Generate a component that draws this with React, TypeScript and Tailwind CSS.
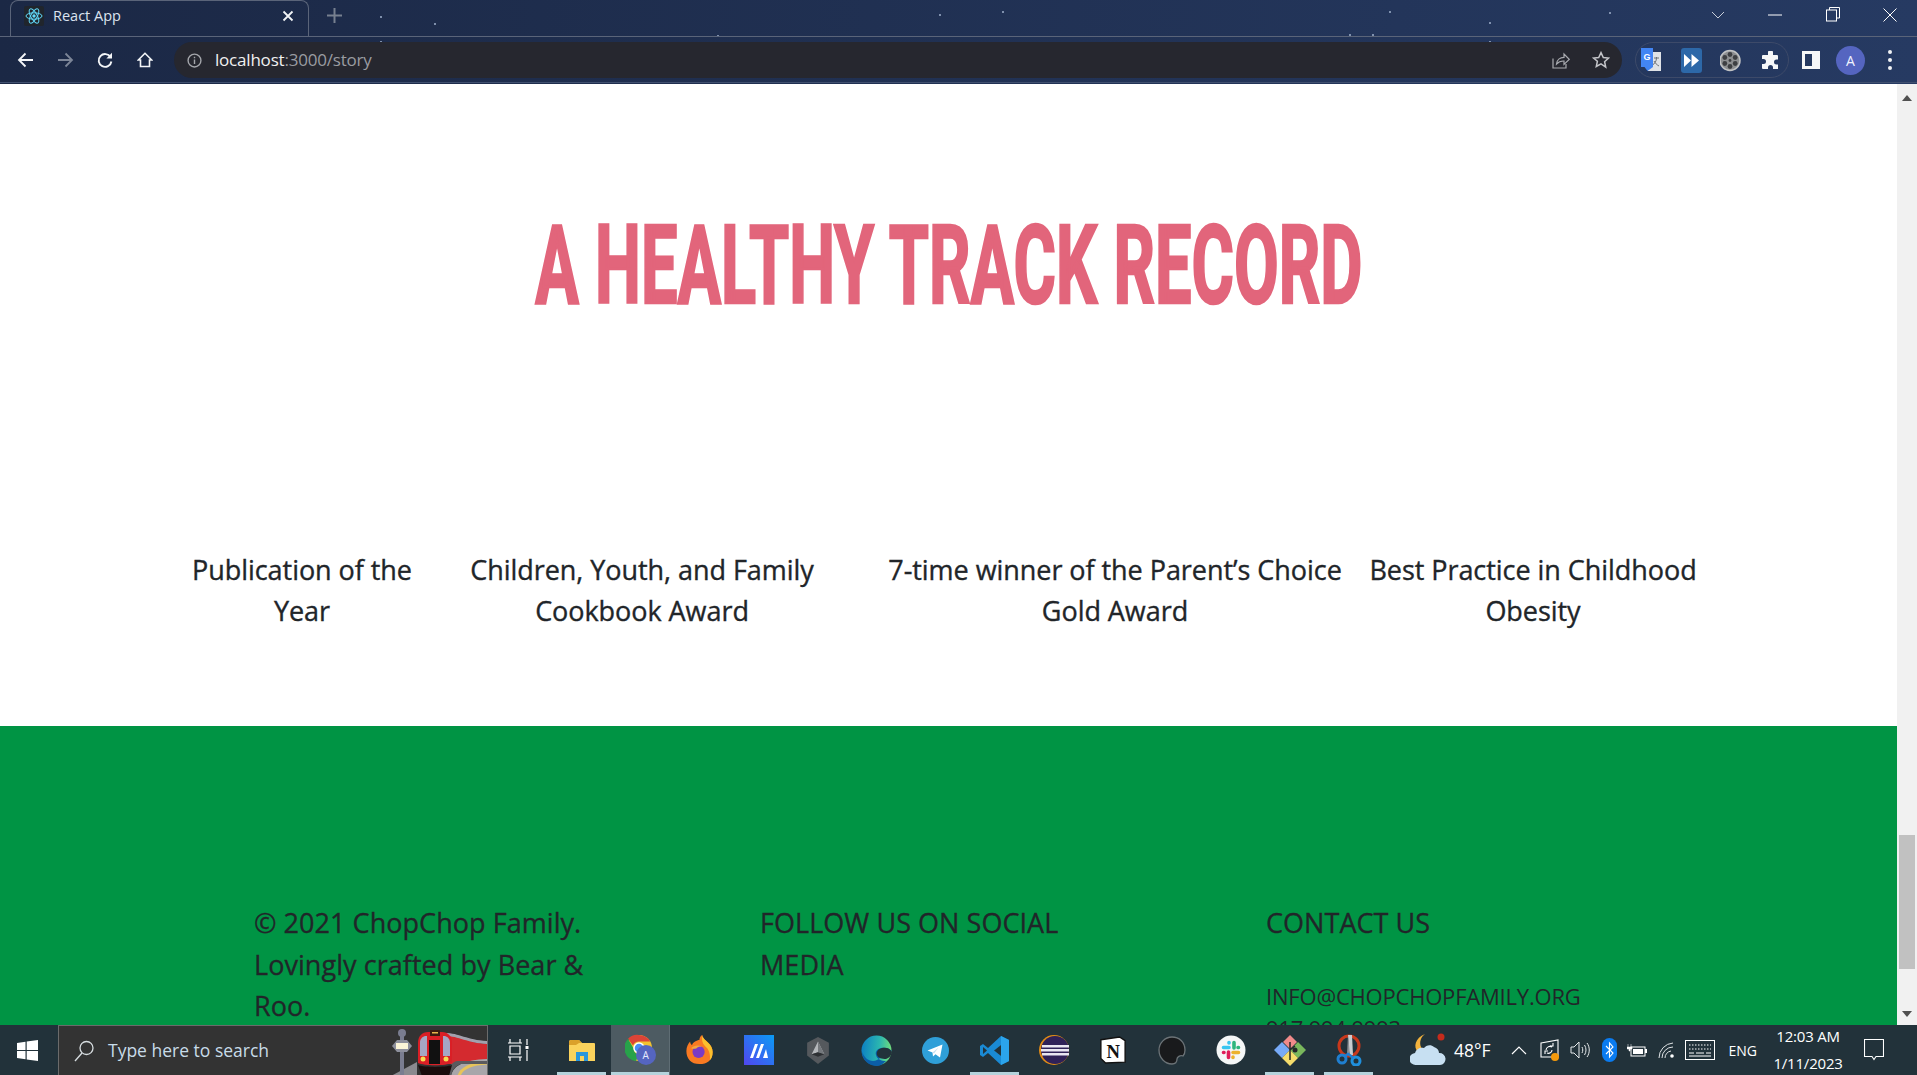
import React from "react";

const stars: string[] = [
  "left-[380px] top-[16px]", "left-[434px] top-[23px]", "left-[380px] top-[41px]",
  "left-[717px] top-[35px]", "left-[939px] top-[14px]", "left-[1002px] top-[11px]",
  "left-[1349px] top-[34px]", "left-[1372px] top-[34px]", "left-[1389px] top-[11px]",
  "left-[1489px] top-[22px]", "left-[1609px] top-[12px]", "left-[1489px] top-[41px]",
];

function Tab() {
  return (
    <div className="ml-[10px] flex h-[37px] w-[299px] items-center rounded-t-[8px] border-x border-t border-[#5a6479] pb-[5px] pl-[13px] pr-[14px]">
      <svg width="20" height="20" viewBox="0 0 20 20" className="rounded-[2px] bg-[#20252c]">
        <g fill="none" stroke="#61dafb" strokeWidth="1">
          <ellipse cx="10" cy="10" rx="8" ry="3.2" />
          <ellipse cx="10" cy="10" rx="8" ry="3.2" transform="rotate(60 10 10)" />
          <ellipse cx="10" cy="10" rx="8" ry="3.2" transform="rotate(120 10 10)" />
        </g>
        <circle cx="10" cy="10" r="1.7" fill="#61dafb" />
      </svg>
      <span className="ml-[9px] font-['Open_Sans',sans-serif] text-[14.5px] text-[#dbe3ef]">React App</span>
      <svg width="12" height="12" viewBox="0 0 12 12" className="ml-auto" stroke="#f1f3f5" strokeWidth="1.8">
        <path d="M1.5 1.5l9 9M10.5 1.5l-9 9" />
      </svg>
    </div>
  );
}

function WindowControls() {
  return (
    <div className="ml-auto flex items-center pb-[7px] pr-[20px]">
      <svg width="14" height="10" viewBox="0 0 14 10" fill="none" stroke="#c8ced9" strokeWidth="1" className="mr-[43px]">
        <path d="M1 2l6 6 6-6" />
      </svg>
      <svg width="14" height="2" viewBox="0 0 14 2" className="mr-[44px]"><path d="M0 1h14" stroke="#fff" strokeWidth="1" /></svg>
      <svg width="14" height="15" viewBox="0 0 14 15" fill="none" stroke="#fff" strokeWidth="1" className="mr-[43px]">
        <rect x="0.5" y="3" width="10" height="11" />
        <path d="M3.5 3V.5h10V11H11" />
      </svg>
      <svg width="14" height="14" viewBox="0 0 14 14" stroke="#fff" strokeWidth="1"><path d="M.5.5l13 13M13.5.5l-13 13" /></svg>
    </div>
  );
}

function ToolbarLeft() {
  return (
    <div className="flex items-center pl-[17px]">
      <svg width="17" height="16" viewBox="0 0 17 16" fill="none" stroke="#f4f6f8" strokeWidth="1.8" className="mr-[23px]"><path d="M16 8H2M8.5 1.5L2 8l6.5 6.5" /></svg>
      <svg width="17" height="16" viewBox="0 0 17 16" fill="none" stroke="#7c8597" strokeWidth="1.8" className="mr-[23px]"><path d="M1 8h14M8.5 1.5L15 8l-6.5 6.5" /></svg>
      <svg width="16" height="17" viewBox="0 0 16 17" fill="none" stroke="#f4f6f8" strokeWidth="1.9" className="mr-[24px]">
        <path d="M13.6 5.2A6.4 6.4 0 1 0 14.4 9.5" />
        <path d="M15 .8v5.6H9.4z" fill="#f4f6f8" stroke="none" />
      </svg>
      <svg width="16" height="16" viewBox="0 0 16 16" fill="none" stroke="#f4f6f8" strokeWidth="1.6"><path d="M8 1.3L1.3 8h2.2v6.5h9V8h2.2z" /></svg>
    </div>
  );
}

function Omnibox() {
  return (
    <div className="ml-[21px] flex h-[36px] w-[1448px] items-center rounded-full bg-[#26272f] pl-[13px] pr-[12px]">
      <svg width="15" height="15" viewBox="0 0 14 14" fill="none" stroke="#a4a6ab" strokeWidth="1.3">
        <circle cx="7" cy="7" r="6" />
        <path d="M7 6v4.2M7 3.6v1.3" />
      </svg>
      <span className="ml-[13px] font-['Open_Sans',sans-serif] text-[17px] tracking-[-0.2px] text-[#f1f1f1]">
        localhost<span className="text-[#9a9ca1]">:3000/story</span>
      </span>
      <svg width="18" height="18" viewBox="0 0 18 18" fill="none" stroke="#a9abb0" strokeWidth="1.2" className="ml-auto mr-[22px]">
        <path d="M1 7.5V17h13v-4" />
        <path d="M4.500 13c.3-4 3.500-6.600 7.500-6.600V3l5.200 5.400-5.200 5V10c-3.200-.2-5.600 1-7.500 3z" />
      </svg>
      <svg width="18" height="18" viewBox="0 0 18 18" fill="none" stroke="#c4c5c9" strokeWidth="1.5"><path d="M9 1.600l2.300 4.900 5.200.6-3.900 3.600 1.100 5.300L9 12.800l-4.700 2.700 1.100-5.300L1.500 7.100l5.200-.6z" /></svg>
    </div>
  );
}

function Extensions() {
  return (
    <div className="ml-[13px] flex h-[36px] w-[154px] items-center rounded-full border border-[#3d4a69] pl-[4px]">
      <svg width="22" height="24" viewBox="0 0 22 24">
        <rect x="8" y="4" width="13" height="19" fill="#dfe2e6" />
        <path d="M14 10h5M16.500 9v1c0 3-2 6-4 7M14 13c1 2 3 4 5 5" stroke="#6d7278" strokeWidth="1" fill="none" />
        <path d="M1 0h12v19l-5.500 4L4.500 19H1z" fill="#4285f4" />
        <text x="3.500" y="12" fontSize="9" fontWeight="700" fill="#fff" fontFamily="Liberation Sans, sans-serif">G</text>
      </svg>
      <svg width="21" height="25" viewBox="0 0 21 25" className="ml-[19px]">
        <rect width="21" height="25" rx="3" fill="#2d68a8" />
        <path d="M3 6l7 6.500-7 6.500zM10.500 6l7.500 6.500-7.500 6.500z" fill="#fff" />
      </svg>
      <svg width="21" height="25" viewBox="0 0 21 25" className="ml-[18px]">
        <circle cx="10" cy="12.500" r="10" fill="#8d8f91" />
        <circle cx="10" cy="12.500" r="10" fill="none" stroke="#c1c3c4" strokeWidth="1.500" />
        <g fill="#3d3f42">
          <circle cx="10" cy="6.500" r="2.400" /><circle cx="10" cy="18.500" r="2.400" />
          <circle cx="4.800" cy="9.500" r="2.400" /><circle cx="15.200" cy="9.500" r="2.400" />
          <circle cx="4.800" cy="15.500" r="2.400" /><circle cx="15.200" cy="15.500" r="2.400" />
          <circle cx="10" cy="12.500" r="1.400" />
        </g>
      </svg>
      <svg width="19" height="19" viewBox="0 0 19 19" fill="#f6f7f8" className="ml-[20px]">
        <path d="M7 1.500a2.500 2.500 0 0 1 5 0V4h4a1 1 0 0 1 1 1v3.500h-1.500a2.500 2.500 0 0 0 0 5H17V18H12v-1.500a2.500 2.500 0 0 0-5 0V18H2a1 1 0 0 1-1-1v-4h1.500a2.500 2.500 0 0 0 0-5H1V5a1 1 0 0 1 1-1h5z" />
      </svg>
    </div>
  );
}

function ToolbarRight() {
  return (
    <div className="flex items-center">
      <div className="ml-[13px] h-[18px] w-[18px] border-[3px] border-r-[8px] border-[#f6f7f8]" />
      <div className="ml-[16px] flex h-[29px] w-[29px] items-center justify-center rounded-full bg-[#5565c0] font-['Open_Sans',sans-serif] text-[14px] text-[#f1f3ff]">A</div>
      <div className="ml-[23px] flex flex-col gap-[4px]">
        <div className="h-[4px] w-[4px] rounded-full bg-[#f1f3f5]" />
        <div className="h-[4px] w-[4px] rounded-full bg-[#f1f3f5]" />
        <div className="h-[4px] w-[4px] rounded-full bg-[#f1f3f5]" />
      </div>
    </div>
  );
}

function BrowserChrome() {
  return (
    <div className="relative h-[84px] shrink-0 bg-gradient-to-r from-[#1b2845] to-[#263a62]">
      {stars.map((c, i) => (
        <div key={i} className={`absolute h-[2px] w-[2px] rounded-full bg-[#9fb0cb] ${c}`} />
      ))}
      <div className="relative flex h-[37px] items-center border-b border-[#5a6479]">
        <Tab />
        <svg width="15" height="15" viewBox="0 0 15 15" stroke="#77808f" strokeWidth="2" className="mb-[5px] ml-[18px]"><path d="M7.500 0v15M0 7.500h15" /></svg>
        <WindowControls />
      </div>
      <div className="relative flex h-[46px] items-center border-b border-[#41506f] pt-[1px]">
        <ToolbarLeft />
        <Omnibox />
        <Extensions />
        <ToolbarRight />
      </div>
    </div>
  );
}

function Award({ w, lines }: { w: string; lines: string[] }) {
  return (
    <div className={`${w} shrink-0 text-center`}>
      {lines.map((l) => <div key={l}>{l}</div>)}
    </div>
  );
}

function Content() {
  return (
    <div className="min-w-0 flex-1 overflow-hidden bg-white font-['Open_Sans',sans-serif] text-[#212529]">
      <div className="flex h-[642px] flex-col">
        <div className="mt-[132px] flex h-[100px] justify-center overflow-visible">
          <h1 className="origin-center scale-x-[0.59] whitespace-nowrap font-['Roboto',sans-serif] text-[110px] font-bold leading-[100px] text-[#e2657b] [-webkit-text-stroke:2.5px_#e2657b]">
            A HEALTHY TRACK RECORD
          </h1>
        </div>
        <div className="mt-[233px] flex pl-[181px] text-[27px] font-medium leading-[41px] tracking-[-0.05px] text-[#212529] [-webkit-text-stroke:0.35px_#212529]">
          <Award w="w-[242px]" lines={["Publication of the", "Year"]} />
          <Award w="w-[438px]" lines={["Children, Youth, and Family", "Cookbook Award"]} />
          <Award w="w-[508px]" lines={["7-time winner of the Parent’s Choice", "Gold Award"]} />
          <Award w="w-[328px]" lines={["Best Practice in Childhood", "Obesity"]} />
        </div>
      </div>
      <div className="grid h-[299px] grid-cols-[506px_506px_506px] bg-[#009444] pl-[254px] pt-[176px] text-[27px] font-medium leading-[41.5px] tracking-[0.05px] [-webkit-text-stroke:0.3px_#212529]">
        <div>
          <div>© 2021 ChopChop Family.</div>
          <div>Lovingly crafted by Bear &amp;</div>
          <div>Roo.</div>
        </div>
        <div>
          <div>FOLLOW US ON SOCIAL</div>
          <div>MEDIA</div>
        </div>
        <div>
          <div>CONTACT US</div>
          <div className="mt-[36px] text-[22px] font-normal leading-[32px] tracking-[-0.2px] [-webkit-text-stroke:0px]">INFO@CHOPCHOPFAMILY.ORG</div>
          <div className="text-[22px] font-normal leading-[32px] tracking-[-0.2px] [-webkit-text-stroke:0px]">917.994.9993</div>
        </div>
      </div>
    </div>
  );
}

function Scrollbar() {
  return (
    <div className="flex w-[20px] shrink-0 flex-col items-center bg-[#f1f1f1]">
      <svg width="10" height="6" viewBox="0 0 10 6" className="mt-[11px]"><path d="M5 0l5 6H0z" fill="#505050" /></svg>
      <div className="mt-[734px] h-[134px] w-[16px] bg-[#c1c1c1]" />
      <svg width="10" height="6" viewBox="0 0 10 6" className="mt-[42px]"><path d="M5 6L0 0h10z" fill="#505050" /></svg>
    </div>
  );
}

function Slot({ children, active }: { children: React.ReactNode; active?: boolean }) {
  return (
    <div className="relative flex h-full w-[59px] shrink-0 items-center justify-center">
      {children}
      {active && <div className="absolute bottom-0 left-[5px] right-[5px] h-[3px] bg-[#b5d3dc]" />}
    </div>
  );
}

function TrainArt() {
  return (
    <svg width="96" height="49" viewBox="0 0 96 49" className="mt-[1px] shrink-0">
      <path d="M0 49l26-14v14z" fill="#8a8a8f" />
      <rect x="9" y="8" width="4" height="41" fill="#7a7d90" />
      <circle cx="11" cy="6" r="4" fill="#7a7d90" />
      <path d="M1 19l5-6h10l5 6-5 6H6z" fill="#8d8f9c" />
      <rect x="5" y="16" width="12" height="6" fill="#fbf5d8" />
      <path d="M50 8c16-2 26 8 46 9v20H50z" fill="#d42a2f" />
      <path d="M54 6c14 0 22 7 42 8v3C76 16 68 9 54 9z" fill="#a2a1ad" />
      <path d="M60 49c2-10 12-16 36-17v17z" fill="#a8a6aa" />
      <path d="M68 49c2-7 10-12 28-13" fill="none" stroke="#e7c45a" strokeWidth="3" />
      <path d="M60 49c1-6 4-10 10-12h26v-3H66c-5 1-9 6-10 15z" fill="#5a5a5e" />
      <path d="M27 36V16c0-7 4-11 10-11h14c6 0 10 4 10 11v20c-6 3-28 3-34 0z" fill="#da1f26" />
      <path d="M29 16c0-4 2-6 5-7l2 0v20h-7zM59 16c0-4-2-6-5-7h-2v20h7z" fill="#a5a7c4" />
      <rect x="38" y="13" width="11" height="24" fill="#111" />
      <rect x="39" y="3" width="10" height="6" fill="#3a1b10" />
      <rect x="41" y="5" width="6" height="1.500" fill="#e7b54a" />
      <circle cx="32" cy="32" r="2.500" fill="#f5dc52" />
      <circle cx="55" cy="32" r="2.500" fill="#f5dc52" />
      <path d="M27 38c7 2.500 27 2.500 34 0l-3 11H31z" fill="#1a0c0c" />
    </svg>
  );
}

function TaskbarApps() {
  return (
    <>
      <Slot active>
        <svg width="28" height="24" viewBox="0 0 28 24">
          <path d="M1 4a2 2 0 0 1 2-2h8l3 3h12a1 1 0 0 1 1 1v17H1z" fill="#fbd35c" />
          <path d="M1 4a2 2 0 0 1 2-2h8l3 3h-3L8 7H1z" fill="#dba12a" />
          <path d="M8 23v-9h12v9h-4v-5h-4v5z" fill="#2a97dc" />
        </svg>
      </Slot>
      <div className="relative flex h-full w-[58px] shrink-0 items-center justify-center bg-[#4d5b62]">
        <svg width="32" height="32" viewBox="0 0 32 32" className="ml-[2px]">
          <circle cx="14" cy="14" r="13" fill="#f2c230" />
          <path d="M14 1a13 13 0 0 1 11.300 6.500H14a6.500 6.500 0 0 0-6 4L3 4.700A13 13 0 0 1 14 1z" fill="#dc4437" />
          <path d="M3 4.700l5.600 9.700a6.500 6.500 0 0 0 5 6L11 27a13 13 0 0 1-8-22z" fill="#27a24a" />
          <circle cx="14" cy="14" r="5" fill="#4a8df6" stroke="#fff" strokeWidth="1.500" />
          <circle cx="21" cy="21" r="10" fill="#5565c0" />
          <text x="17.500" y="25" fontSize="10" fill="#e8ebff" fontFamily="Open Sans, sans-serif">A</text>
        </svg>
        <div className="absolute bottom-0 left-0 right-0 h-[3px] bg-[#b5d3dc]" />
      </div>
      <div className="h-full w-[1px] shrink-0 bg-[#5f6d74]" />
      <Slot>
        <svg width="29" height="30" viewBox="0 0 30 32">
          <path d="M15 31C6 31 1 25 1 17c0-4 2-8 4-10 0 2 1 3 2 4 1-4 5-5 8-6 0-2 1-4 3-5 0 3 3 5 6 8 3 3 5 6 5 10 0 9-6 13-14 13z" fill="#f97a22" />
          <path d="M18 0c0 3 3 5 6 8 3 3 5 6 5 10 0 4-1 7-3 9 1-6-1-12-5-15-3-3-4-7-3-12z" fill="#fbc02d" />
          <circle cx="14" cy="18" r="6.500" fill="#7b3bc4" />
          <path d="M6 14c3-3 9-4 12-1-3-1-5 0-6 1-2 1-4 1-6 0z" fill="#f3a73f" />
        </svg>
      </Slot>
      <Slot>
        <svg width="30" height="30" viewBox="0 0 30 30">
          <defs>
            <linearGradient id="wsg" x1="0" y1="1" x2="1" y2="0">
              <stop offset="0" stopColor="#5146f0" />
              <stop offset="1" stopColor="#0a9bf4" />
            </linearGradient>
          </defs>
          <rect width="30" height="30" fill="url(#wsg)" />
          <path d="M6 23L11 9h3L9 23zM12 23l5-14h3l-5 14zM19 23l3-9 2 9z" fill="#fff" />
        </svg>
      </Slot>
      <Slot>
        <svg width="26" height="29" viewBox="0 0 26 32">
          <path d="M13 1l12 6.500v14L13 31 1 21.500v-14z" fill="#55595d" />
          <path d="M13 6L6 20l7-2 7 2z" fill="#b4b7ba" />
          <path d="M13 6l7 14-7-2z" fill="#74787c" />
          <path d="M6 20l7-2 7 2-7 3z" fill="#2d3033" />
        </svg>
      </Slot>
      <Slot>
        <svg width="31" height="31" viewBox="0 0 31 31">
          <defs>
            <linearGradient id="edg" x1="0" y1="0.200" x2="1" y2="0.300">
              <stop offset="0" stopColor="#0c7fc4" />
              <stop offset="0.600" stopColor="#2bb6b0" />
              <stop offset="1" stopColor="#6fdc7c" />
            </linearGradient>
          </defs>
          <circle cx="15.500" cy="15.500" r="15" fill="url(#edg)" />
          <path d="M31 16c-3-3-7-4-11-3-4 1-6 4-5 7 1 4 5 6 10 6-3 3-6 5-9 5-8 0-15-6-15-14 2 5 6 9 11 9 6 0 8-6 19-10z" fill="#0b5ea8" />
          <path d="M31 17c-2-4-6-5-10-4-4 1-6 4-5 7 1 3 5 4 9 4 3-1 5-3 6-7z" fill="#22323a" />
        </svg>
      </Slot>
      <Slot>
        <svg width="27" height="27" viewBox="0 0 27 27">
          <circle cx="13.500" cy="13.500" r="13.500" fill="#2f9fd8" />
          <path d="M5.500 13.500L20.500 7.500l-2.500 13-4.500-3.200-2.500 2.200-.5-4z" fill="#fff" />
          <path d="M10.500 15.500l6-5-4.500 6z" fill="#c6dff0" />
        </svg>
      </Slot>
      <Slot active>
        <svg width="31" height="31" viewBox="0 0 31 31">
          <path d="M22 1l8 4v21l-8 4L9 18l-5 4-3-2V11l3-2 5 4z" fill="#1a8ad4" />
          <path d="M22 1l8 4v21l-8 4V21l-7-5.500 7-5.500z" fill="#2ba4ec" />
          <path d="M22 10l-7 5.500 7 5.500z" fill="#22323a" />
          <path d="M4 12l4 3.500-4 3.500z" fill="#22323a" />
        </svg>
      </Slot>
      <Slot>
        <svg width="30" height="30" viewBox="0 0 30 30">
          <circle cx="15" cy="15" r="15" fill="#e28c16" />
          <circle cx="16" cy="15" r="14" fill="#2f2158" />
          <g fill="#e9e6f1">
            <rect x="3" y="10" width="27" height="2.500" />
            <rect x="2" y="14" width="28" height="2.500" />
            <rect x="3" y="18" width="27" height="2.500" />
          </g>
        </svg>
      </Slot>
      <Slot>
        <svg width="28" height="28" viewBox="0 0 28 30">
          <path d="M1 4l20-3 6 4v23L6 29l-5-5z" fill="#fff" stroke="#111" strokeWidth="1.500" />
          <text x="7" y="24" fontSize="20" fontWeight="700" fill="#111" fontFamily="Liberation Serif, serif">N</text>
        </svg>
      </Slot>
      <Slot>
        <svg width="28" height="29" viewBox="0 0 28 29">
          <path d="M14 1c7 0 13 5 13 13 0 3-1 5-2 6-3-1-6 1-6 3 0 3-2 5-5 5C7 28 1 22 1 14 1 7 7 1 14 1z" fill="#191a1c" stroke="#6c7377" strokeWidth="1.300" />
        </svg>
      </Slot>
      <Slot>
        <svg width="30" height="30" viewBox="0 0 30 30">
          <circle cx="15" cy="15" r="14.500" fill="#f5f7f7" />
          <g strokeWidth="3.600" strokeLinecap="round" fill="none">
            <path d="M7.500 12.500H13M13 7.500v.5" stroke="#36c5f0" />
            <path d="M18 7.500V13M22.500 12.500H22" stroke="#2eb67d" />
            <path d="M22.500 17.500H17M17 22.500V22" stroke="#ecb22e" />
            <path d="M12.500 22.500V17M7.500 17.500H8" stroke="#e01e5a" />
          </g>
        </svg>
      </Slot>
      <Slot active>
        <svg width="32" height="32" viewBox="0 0 32 32">
          <path d="M16 1l7 7-7 7-7-7z" fill="#f08a8a" />
          <path d="M8 8l8 8-8 8-8-8z" fill="#77aaf7" />
          <path d="M24 8l8 8-8 8-8-8z" fill="#79b75c" />
          <path d="M16 16l8 8-8 8-8-8z" fill="#f5dd6c" />
          <path d="M16 8v18M16 16l5-4" stroke="#23262a" strokeWidth="1.500" fill="none" />
          <circle cx="21" cy="16" r="2.500" fill="#23262a" />
        </svg>
      </Slot>
      <Slot active>
        <svg width="26" height="32" viewBox="0 0 26 32">
          <circle cx="13" cy="12" r="10" fill="none" stroke="#c9381b" strokeWidth="3" />
          <path d="M12 1h4l1 20h-3l-1-4z" fill="#c9cccf" />
          <path d="M12 1l-1 20h3z" fill="#8c9095" />
          <circle cx="6" cy="25" r="4" fill="none" stroke="#1f7fd0" strokeWidth="3" />
          <circle cx="20" cy="27" r="4" fill="none" stroke="#1f8fdc" strokeWidth="3" />
          <path d="M9 22l3-2 3 2 2 2" stroke="#1f7fd0" strokeWidth="2.500" fill="none" />
        </svg>
      </Slot>
    </>
  );
}

function Tray() {
  return (
    <div className="flex h-full flex-1 items-center font-['Open_Sans',sans-serif] text-white">
      <svg width="36" height="36" viewBox="0 0 36 36" className="ml-[32px]">
        <path d="M15 2c-4 3-6 8-4 13 2 4 7 6 11 4-3 4-10 5-14 1C3 15 5 6 15 2z" fill="#f3b33d" />
        <circle cx="31" cy="5" r="3.500" fill="#c42b1c" />
        <path d="M6 33a6 6 0 0 1-1-12c1-4 5-6 9-5 2-3 7-4 10-1 3 1 5 3 5 6a6 6 0 0 1 1 12z" fill="#c7e0f2" />
      </svg>
      <span className="ml-[8px] text-[17.5px]">48°F</span>
      <svg width="16" height="10" viewBox="0 0 16 10" fill="none" stroke="#fff" strokeWidth="1.200" className="ml-[20px]"><path d="M1 9l7-7 7 7" /></svg>
      <svg width="20" height="24" viewBox="0 0 20 24" className="ml-[13px]" fill="none" stroke="#fff" strokeWidth="1.100">
        <path d="M1 5l17-3v17H1z" />
        <path d="M6 12a4 4 0 0 1 6-3M12 12a3.500 3.500 0 0 1-5 3M10 8h3V5M8 13H5v3" />
        <circle cx="15" cy="19" r="4" fill="#f59a0c" stroke="none" />
      </svg>
      <svg width="20" height="18" viewBox="0 0 20 18" fill="none" stroke="#e6eaec" strokeWidth="1" className="ml-[10px]">
        <path d="M1 6h3l5-5v16l-5-5H1z" />
        <path d="M12 6c1 2 1 4 0 6M14.500 4c2 3 2 7 0 10M17 2c3 4 3 10 0 14" />
      </svg>
      <svg width="15" height="24" viewBox="0 0 15 24" className="ml-[12px]">
        <rect width="15" height="24" rx="7.500" fill="#0a7bf0" />
        <path d="M4 8l7 7-3.500 4V5l3.500 4-7 7" fill="none" stroke="#fff" strokeWidth="1.100" />
      </svg>
      <svg width="20" height="14" viewBox="0 0 20 14" className="ml-[10px]">
        <path d="M1 1v3M4 1v3M0 4h5v2H3v2H2V6H0z" fill="#fff" stroke="#fff" strokeWidth="0.500" />
        <rect x="4" y="4" width="14" height="9" fill="none" stroke="#fff" strokeWidth="1" />
        <rect x="6" y="6" width="10" height="5" fill="#fff" />
        <rect x="18" y="6" width="2" height="4" fill="#fff" />
      </svg>
      <svg width="16" height="16" viewBox="0 0 16 16" fill="none" stroke="#dfe3e5" strokeWidth="1" className="ml-[11px]">
        <path d="M1 16A15 15 0 0 1 15 1M4 16A11 11 0 0 1 15 5M7 16a7 7 0 0 1 6-7" />
        <circle cx="14" cy="14" r="1.800" fill="#fff" stroke="none" />
      </svg>
      <svg width="30" height="20" viewBox="0 0 30 20" className="ml-[11px]" fill="none" stroke="#fff" strokeWidth="1">
        <rect x="0.500" y="0.500" width="29" height="19" />
        <path d="M4 5h22M4 9h22" strokeDasharray="1.500 1.500" />
        <path d="M4 13h5M11 13h8M21 13h5M4 16h22" />
      </svg>
      <span className="ml-[14px] text-[14px]">ENG</span>
      <div className="ml-[15px] w-[72px] text-center text-[15px] leading-[27px] tracking-[-0.2px]">
        <div>12:03 AM</div>
        <div>1/11/2023</div>
      </div>
      <svg width="20" height="22" viewBox="0 0 20 22" fill="none" stroke="#fff" strokeWidth="1.100" className="ml-[20px]">
        <path d="M.5.500h19v17H12l-2 3-2-3H.5z" />
      </svg>
    </div>
  );
}

function Taskbar() {
  return (
    <div className="flex h-[50px] shrink-0 items-stretch bg-[#22323a]">
      <div className="flex w-[58px] shrink-0 items-center justify-center pr-[4px]">
        <svg width="21" height="21" viewBox="0 0 21 21" fill="#fff">
          <path d="M0 3l8.500-1.300V10H0zM9.700 1.500L21 0v10H9.700zM0 11h8.500v8.300L0 18zM9.700 11H21v10L9.700 19.500z" />
        </svg>
      </div>
      <div className="flex h-full w-[430px] shrink-0 items-center overflow-hidden border-x border-t border-[#6b6b6b] bg-[#333333] pl-[15px]">
        <svg width="20" height="22" viewBox="0 0 20 22" fill="none" stroke="#d7dde0" strokeWidth="1.300" className="shrink-0">
          <circle cx="12.500" cy="8" r="6.500" />
          <path d="M8 13L1 21" />
        </svg>
        <span className="ml-[14px] whitespace-nowrap font-['Open_Sans',sans-serif] text-[17.5px] text-[#c8dce8]">Type here to search</span>
        <div className="flex-1" />
        <TrainArt />
      </div>
      <div className="flex h-full w-[64px] shrink-0 items-center justify-center pr-[4px]">
        <svg width="21" height="24" viewBox="0 0 21 24" fill="none" stroke="#fff" strokeWidth="1.200">
          <path d="M0 5h14M0 19h14M2 8h10v8H2zM2 1v4M12 1v4M2 19v4M12 19v4M19 1v6M19 12v11" />
          <rect x="17.500" y="8" width="3" height="3" fill="#fff" stroke="none" />
        </svg>
      </div>
      <TaskbarApps />
      <Tray />
    </div>
  );
}

export default function App() {
  return (
    <div className="flex h-[1075px] w-[1917px] flex-col overflow-hidden">
      <BrowserChrome />
      <div className="flex min-h-0 flex-1">
        <Content />
        <Scrollbar />
      </div>
      <Taskbar />
    </div>
  );
}
